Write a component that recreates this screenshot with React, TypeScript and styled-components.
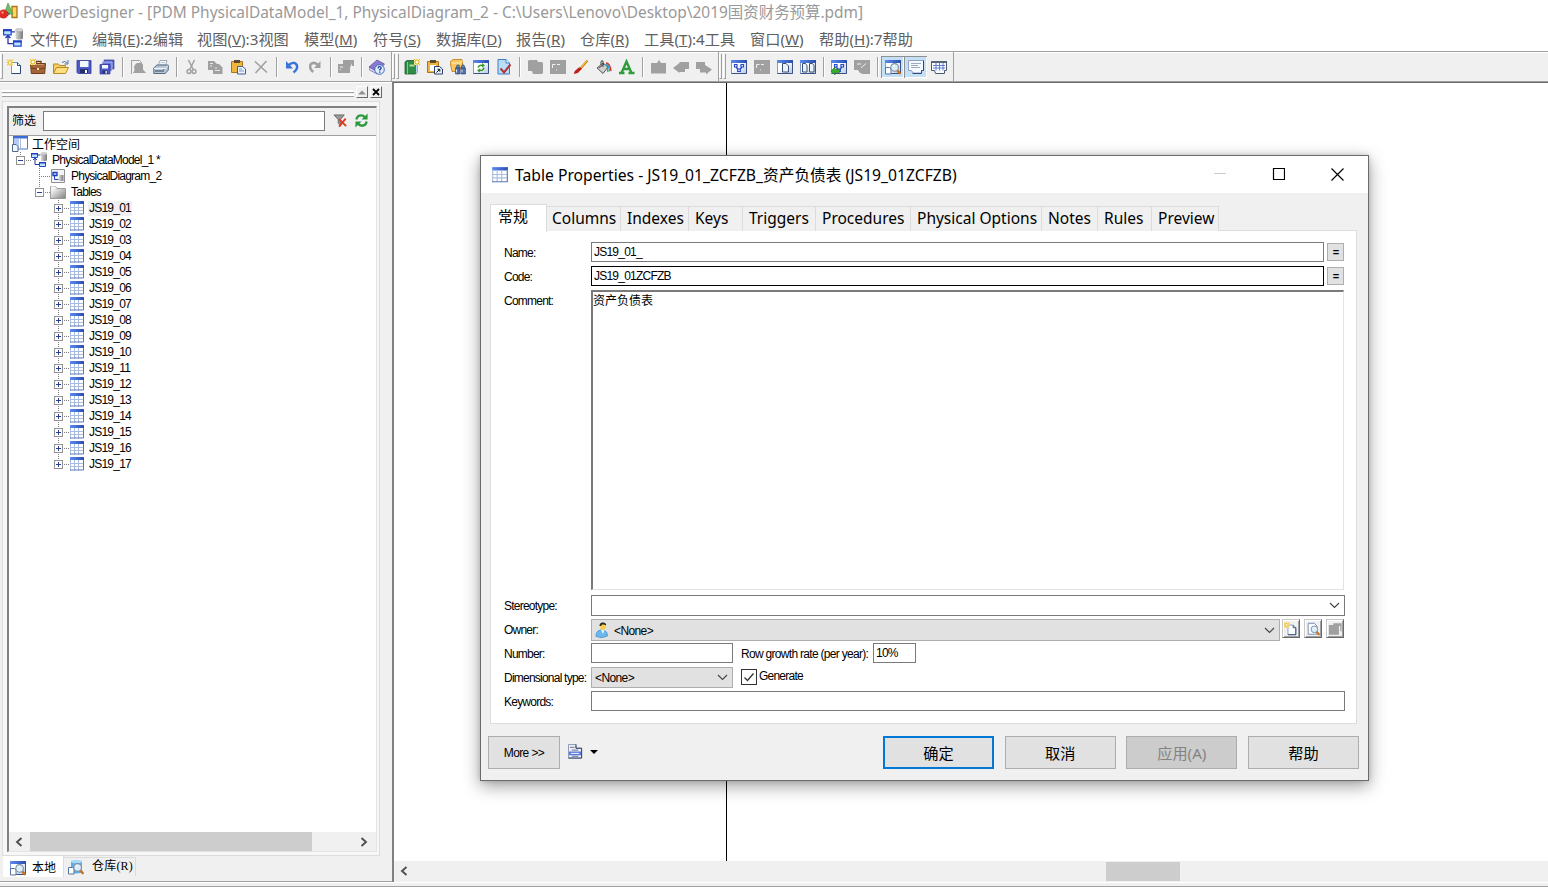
import React from "react";
import styled, { createGlobalStyle, css } from "styled-components";

const UI = `"Noto Sans", "Noto Sans CJK SC", sans-serif`;
const SMALL = `"Liberation Sans", "Noto Sans CJK SC", sans-serif`;

const Global = createGlobalStyle`
  * { box-sizing: border-box; }
  body { margin: 0; background: #f0f0f0; overflow: hidden; }
  input, textarea, button { font: inherit; letter-spacing: inherit; color: inherit; }
`;

/* ---------- icons ---------- */

const Svg = styled.svg`
  display: block;
  flex: none;
`;

const spark = (
  <g>
    <path d="M0 0h6v6h-6z" fill="#fdf0a8" />
    <path d="M0 0l6 6M6 0l-6 6M3 0v6M0 3h6" stroke="#dcaa1c" strokeWidth=".9" />
    <path d="M2 2h2v2h-2z" fill="#fffbe0" />
  </g>
);
const lens = (
  <g>
    <path d="M12 11l2.6 3" stroke="#c8731c" strokeWidth="2.6" strokeLinecap="round" />
    <circle cx="9.6" cy="8.4" r="3.8" fill="#dcecf8" stroke="#7d8ea0" strokeWidth="1.1" />
    <path d="M7.8 7.6a2 2 0 0 1 2-1.4" stroke="#fff" fill="none" />
  </g>
);
const win = (
  <g>
    <path d="M.5 1.5h15v13h-15z" fill="url(#pane)" stroke="#7e9ad0" />
    <path d="M0 1h16v3h-16z" fill="url(#blueBar)" />
    <path d="M15.5 4v10.5h-15" stroke="#3c5282" fill="none" />
  </g>
);
const nodes = (
  <g fill="#fff" stroke="#2748c8" strokeWidth="1.2">
    <path d="M5 8l3 3.5 3-3.5" fill="none" />
    <path d="M3.500 5.500h2.500v2.500h-2.500zM10 5.500h2.500v2.500h-2.500zM6.700 10h2.600v2.500h-2.600z" />
  </g>
);
const dbModel = (
  <g>
    <path d="M10 1.500v6.500c0 1.600 6 1.600 6 0v-6.500z" fill="url(#steel)" />
    <ellipse cx="13" cy="1.600" rx="3" ry="1.200" fill="#d8d8d8" stroke="#aaa" strokeWidth=".5" />
    <path d="M4 6v6.500h4M2 8l2-2 2 2M6 3h3.500" stroke="#2232a8" fill="none" />
    <path d="M.5 1.500h6v4h-6zM8.500 10.500h6v4h-6z" fill="#bfe2fb" stroke="#1f4fd0" />
    <path d="M0 1h7v1.600h-7zM8 10h7v1.600h-7z" fill="#1f3fc0" />
  </g>
);

const G = "#a0a0a0";

const ICONS: Record<string, React.ReactNode> = {
  app: (
    <g>
      <path d="M12 3.500h5v11h-5z" fill="#ffd75a" stroke="#a8741c" strokeWidth="1.300" />
      <path d="M8 0l5 11h-9z" fill="#6cbf62" stroke="#4c9248" strokeWidth=".6" />
      <circle cx="3.500" cy="11" r="4.500" fill="#e02a24" />
      <circle cx="2.500" cy="9.500" r="1.200" fill="#ff8f80" />
      <path d="M7 9l2.500 2-2.500 2" stroke="#5c4030" fill="none" />
    </g>
  ),
  model: dbModel,
  new: (
    <g>
      <path d="M4.500 3.500h6l3 3v8h-9z" fill="#fafdff" stroke="#7f98b8" />
      <path d="M10.500 3.500v3h3v8h-9" stroke="#2c466e" fill="none" />
      <g transform="translate(0 .5)">{spark}</g>
    </g>
  ),
  briefcase: (
    <g>
      <path d="M6 4v-1.500h5v1.500" stroke="#6b3a1a" fill="none" strokeWidth="1.300" />
      <path d="M.5 4.500h15l-.8 10h-13.400z" fill="#a4653a" stroke="#6f3d1e" />
      <path d="M1 9q7 2.500 14 0" stroke="#6f3d1e" fill="none" />
      <path d="M2 5.500h12" stroke="#cc9468" />
      <path d="M7 9h2v2h-2z" fill="#f2dc9a" />
      {spark}
    </g>
  ),
  open: (
    <g>
      <path d="M.5 14v-9h5l1 1.500h6v3" fill="#f5cf65" stroke="#b98a2a" />
      <path d="M.5 14.500l3-6h12l-3 6z" fill="#ffdf7e" stroke="#b98a2a" />
      <path d="M9 3.500q3-2.500 5 .5M15 1v4h-3.500" stroke="#50709c" fill="none" />
    </g>
  ),
  save: (
    <g>
      <path d="M1 1.500h14v13h-13l-1-1z" fill="#4d59c4" stroke="#2e3798" strokeWidth=".8" />
      <path d="M4 2h8.500v6h-8.500z" fill="#f2f6ff" />
      <path d="M4 10h8v4h-8z" fill="#23306c" />
      <path d="M9 11h2v3h-2z" fill="#fff" />
    </g>
  ),
  saveAll: (
    <g>
      <path d="M5 1h10v9h-10z" fill="#5563c8" stroke="#2e3798" strokeWidth=".7" />
      <path d="M3 3h10v9h-10z" fill="#6a78d8" stroke="#c9d0ff" strokeWidth=".7" />
      <path d="M1 5.500h10v9.500h-10z" fill="#4d59c4" stroke="#2e3798" strokeWidth=".7" />
      <path d="M3 6h6v3.500h-6z" fill="#f2f6ff" />
      <path d="M3.500 11.500h5v3h-5z" fill="#23306c" />
      <path d="M6.500 12h1.300v2.500h-1.300z" fill="#fff" />
    </g>
  ),
  preview: (
    <g fill={G}>
      <path d="M1.500 1.500h8l2 2v2" stroke={G} fill="none" />
      <path d="M1 1h1v14h-1zM1 14h15l-3-3.500v-5l-3-2-4 1-2 3 .5 4-1.500 2.500z" />
    </g>
  ),
  print: (
    <g>
      <path d="M5 7l2-5.500h7l-2 6z" fill="#fff" stroke="#8494ac" strokeWidth=".8" />
      <path d="M7.500 3.500h4.500M7 5.300h4.500" stroke="#9fb3cc" strokeWidth=".7" />
      <path d="M.8 9l3-3h11.500v5l-3 3.500h-11.500z" fill="#b9c6d6" stroke="#4a5f7c" strokeWidth=".9" />
      <path d="M1 9.500h11.500l2.500-3" stroke="#fff" fill="none" strokeWidth=".8" />
      <path d="M2 12h9" stroke="#33475f" />
      <path d="M10 10.500h1.500" stroke="#3ab54a" />
    </g>
  ),
  cut: (
    <g stroke={G} fill="none" strokeWidth="1.500">
      <path d="M4.500 1l4.500 9M10.500 1l-4.500 9" />
      <circle cx="5" cy="12.500" r="1.900" />
      <circle cx="10" cy="12.500" r="1.900" />
    </g>
  ),
  copy: (
    <g fill={G}>
      <path d="M1 2h6l3 3v6h-9z" />
      <path d="M6 5h6l3.500 3.500v6.500h-9.500z" />
      <path d="M3 4.500h3M3 7h2M8 9h2M8 11.500h5" stroke="#f0f0f0" strokeWidth=".9" />
    </g>
  ),
  paste: (
    <g>
      <path d="M1.500 2.500h11v11h-11z" fill="#eeb63e" stroke="#a87618" />
      <path d="M4 1h6v3h-6z" fill="#5a4a32" />
      <path d="M7.500 7.500h5l3 2.500v5h-8z" fill="#eaf3ff" stroke="#41608e" />
      <path d="M9 10h3M9 12h5" stroke="#7a99c4" />
    </g>
  ),
  del: <path d="M2 2.500l12 11M13.500 2l-11 12" stroke={G} strokeWidth="1.600" />,
  undo: (
    <g>
      <path d="M4 6.500q6-5 8.800-.5 1.500 4-3.300 7.500" stroke="#3a74d8" strokeWidth="2.500" fill="none" />
      <path d="M2 2v7.500h7z" fill="#3a74d8" />
    </g>
  ),
  redo: (
    <g>
      <path d="M11 6q-4-4-7.500-.5-1.500 4 2.700 7.500" stroke={G} strokeWidth="2.500" fill="none" />
      <path d="M13.500 2v7h-6.500z" fill={G} />
    </g>
  ),
  props: (
    <g fill={G}>
      <path d="M5 1h11v6h-2v-3l-2 5v5h-12v-9h5z" />
      <path d="M2 8h3M2 10.500h1" stroke="#f0f0f0" />
    </g>
  ),
  gProps: <path d="M1 3.500h5v-2h9.500v9h-1.500v-6h-1.500v10h-11.500z" fill={G} />,
  help: (
    <g>
      <path d="M0 8l8-7 7.500 4-7 8z" fill="#8a7ad0" stroke="#5546a0" strokeWidth=".7" />
      <path d="M0 8v2.500l8 4.500.5-2z" fill="#e8e6f8" stroke="#5546a0" strokeWidth=".7" />
      <circle cx="10.500" cy="10.500" r="4.800" fill="#e2eefc" stroke="#3e68bc" />
      <path d="M9 9.300q.2-1.600 1.600-1.600t1.600 1.400q0 1-1.500 1.800v.6M10.700 12.500v1.200" stroke="#1d3f9a" strokeWidth="1.300" fill="none" />
    </g>
  ),
  book: (
    <g>
      <path d="M1 3l2-1.500h10v12l-1.500 1.500h-10.500z" fill="#2f8c46" stroke="#1e5c30" strokeWidth=".8" />
      <path d="M3 3h1v12h-1z" fill="#7fc98c" />
      <path d="M12.500 6v8" stroke="#bcd4f0" />
      <path d="M5.500 5.500h5v2h-5z" fill="#a9dfae" />
      <g transform="translate(10 0)">{spark}</g>
    </g>
  ),
  pasteLink: (
    <g>
      <path d="M.5 2.500h11v11h-11z" fill="#eeb63e" stroke="#a87618" />
      <path d="M3 1h6v3h-6z" fill="#5a4a32" />
      <path d="M3 6h6v6h-6z" fill="#fff" />
      <path d="M7.500 7.500h5l3 2.500v5h-8z" fill="#eaf3ff" stroke="#2a406e" />
      <path d="M9.500 13.500l3-3M10.500 10.300h2.300v2.300" stroke="#111" fill="none" />
    </g>
  ),
  find: (
    <g>
      <path d="M0 3l3-2.500h9l1 7-5 5h-6z" fill="#ffc65c" stroke="#b67a1e" strokeWidth=".8" />
      <path d="M2 4h9l1-2.500" stroke="#fff0c0" fill="none" />
      <path d="M6 9l1-3h2l1 3zM11 9l1-3h2l1 3z" fill="#6a86b4" stroke="#2c4370" strokeWidth=".6" />
      <path d="M5.500 9h4.500v6h-4.500zM11 9h4.500v6h-4.500z" fill="#4f6fa6" stroke="#2c4370" strokeWidth=".6" />
      <path d="M6.500 10.500v3M12 10.500v3" stroke="#dce9ff" />
    </g>
  ),
  syncWin: (
    <g>
      {win}
      <path d="M5 8.500q1-3 4.500-2M11 8.500q-1 4-4.500 2.500" stroke="#3a9a28" strokeWidth="1.500" fill="none" />
      <path d="M9 4l3 2.500-3 2zM7 9.500l-3 2 3 2z" fill="#3a9a28" />
    </g>
  ),
  check: (
    <g>
      <path d="M2 .5h8l3.500 3.500v11h-11.500z" fill="#b9dcf8" stroke="#3d7cc0" />
      <path d="M10 .5v3.500h3.500" fill="#fff" stroke="#3d7cc0" />
      <path d="M4.500 9.500l3.500 4 6.500-8" stroke="#b03636" strokeWidth="2" fill="none" />
    </g>
  ),
  gShape: <path d="M1 2l1-1h8l1 2h4l1 1v10l-1 1h-9l-1-3h-4z" fill={G} />,
  gWin: (
    <g>
      <path d="M0 1h16v14h-16z" fill={G} />
      <path d="M2.500 9v-3.500h3M7 5.500h3M6 11h1" stroke="#f0f0f0" fill="none" />
    </g>
  ),
  brush: (
    <g>
      <path d="M14.500 1.500l-7 8" stroke="#c98a14" strokeWidth="2.200" />
      <path d="M14.500 1l-7 8" stroke="#ffd860" strokeWidth=".8" />
      <path d="M7.800 8.500l1 1.500-4 4-4 1 1-3 4-3.500z" fill="#b8221c" />
    </g>
  ),
  bucket: (
    <g>
      <path d="M1 9l6-5 5 4-5 6.500z" fill="#d0d0d0" stroke="#444" strokeWidth=".9" />
      <path d="M3 9l5-4M7 8v-6q-2-1-2 1v3" stroke="#444" fill="none" />
      <path d="M10 4q4 0 5 8" stroke="#e02a24" strokeWidth="1.400" fill="none" />
      <path d="M10 5.500q3 0 3.500 7" stroke="#18a0e0" strokeWidth="1.400" fill="none" />
      <path d="M11 8q1 2 .8 5" stroke="#28b840" strokeWidth="1.200" fill="none" />
    </g>
  ),
  letter: (
    <path
      d="M0 14h5.500M9.500 14h6M2.500 14l5-11.500 5 11.500M5 10h6"
      stroke="#2f9c3c"
      strokeWidth="2.400"
      fill="none"
    />
  ),
  gFolder: <path d="M1 4h6l2-3 2 3h5v10.500h-15z" fill={G} />,
  gLeft: <path d="M0 9l6.500-5v-1h9.500v7h-4v3h-5.500v1z" fill={G} />,
  gRight: <path d="M0 3h9v3l7 4.500-6 5v-2h-6v-3.500h-4z" fill={G} />,
  winNodes: (
    <g>
      {win}
      {nodes}
    </g>
  ),
  winPage: (
    <g>
      {win}
      <path d="M5.500 4.500h3.500l2.500 2.500v6h-6z" fill="#eaf2fb" stroke="#3c5070" />
    </g>
  ),
  winPages: (
    <g>
      {win}
      <path d="M2.500 4.500h3l1.500 2v6.500h-4.500zM9.500 4.500h3l1.500 2v6.500h-4.500z" fill="#eaf2fb" stroke="#3c5070" />
    </g>
  ),
  winGo: (
    <g>
      {win}
      {nodes}
      <path d="M0 12l4-4v2.500h4.500v3h-4.500v2.500z" fill="#35b02c" stroke="#1c7016" strokeWidth=".6" />
    </g>
  ),
  gWinGo: (
    <g>
      <path d="M0 1h16v14h-7l-3-1-2-3h-4z" fill={G} />
      <path d="M3 5h4M7 9l5-4.500" stroke="#f0f0f0" />
    </g>
  ),
  winLens: (
    <g>
      {win}
      <path d="M.5 8.500h4l1.500 1.500v5h-5.500z" fill="#fff" stroke="#5673a4" />
      {lens}
    </g>
  ),
  winText: (
    <g>
      <path d="M.5 1.500h15v10h-2v2.500h-8.500l-1.500-2.500h-3z" fill="#f7fbff" stroke="#8ea2c4" />
      <path d="M15.500 1.500v10h-2v3h-9" stroke="#344a74" fill="none" />
      <path d="M3 4.500h10M3 6.500h7M3 8.500h9" stroke="#9caac4" />
    </g>
  ),
  winGrid: (
    <g>
      <path d="M.5 2.500h15v9h-2v3h-9l-1-3h-3z" fill="#f7fbff" stroke="#4c5870" />
      <path d="M0 2h16v2h-16z" fill="#5a6478" />
      <path d="M2 6.500h12M2 9h12M5 4v7.500M8.500 4v7.500M12 4v7.500" stroke="#5673c8" strokeWidth=".9" />
    </g>
  ),
  filterOff: (
    <g>
      <path d="M1 2h11l-4 5v6l-2.500-2v-4z" fill="#999" stroke="#555" strokeWidth=".8" />
      <path d="M6.500 6.500l7.500 7.500M13.500 6l-7 8.500" stroke="#e03c20" strokeWidth="2.100" />
    </g>
  ),
  refresh: (
    <g>
      <path d="M2.500 7q1-4.500 5-4.500 2.500 0 4 2M13.500 9q-1 4.500-5 4.500-2.500 0-4-2" stroke="#2c9a3c" strokeWidth="2.600" fill="none" />
      <path d="M14.500 .5v6.500h-6.500zM1.500 15.500v-6.500h6.500z" fill="#2c9a3c" />
    </g>
  ),
  workspace: (
    <g>
      <path d="M1.500 .5h14v12.500h-14z" fill="#fff" stroke="#4a78d0" />
      <path d="M1 0h15v2.500h-15z" fill="#3a6cd8" />
      <path d="M2 3h5v9.500h-5z" fill="#b4ccf2" />
      <path d="M8 3h1v10h-1z" fill="#a8bce0" />
      <path d="M.5 8.500h3.500l2 2v5h-5.500z" fill="#f4f8ff" stroke="#50688c" />
    </g>
  ),
  diagram: (
    <g>
      <path d="M1.500 1.500h13v13h-13z" fill="#f4f4f4" stroke="#909090" />
      <path d="M3 4.500h4v3h-4z" fill="#bfe2fb" stroke="#1f3fc0" strokeWidth="1.400" />
      <path d="M4.500 8v3.500h4" stroke="#1f3fc0" fill="none" />
      <path d="M9 7h4.500v6h-4.500z" fill="url(#steel)" />
    </g>
  ),
  folder: (
    <g>
      <path d="M.5 14.500v-12h5l1.500 2h8.500v10z" fill="url(#folderGray)" stroke="#8c8c8c" strokeWidth=".8" />
      <path d="M1 3h4.500" stroke="#fff" />
    </g>
  ),
  table: (
    <g>
      <path d="M1 1h14v13.500h-14z" fill="#fff" />
      <path d="M1 1h14v3h-14z" fill="url(#blueBar)" />
      <path d="M1.500 4v10.500M5.500 4v10.500M9.500 4v10.500M1 7.500h13M1 10.500h13" stroke="#a9bde0" />
      <path d="M1 14h13.500v-10" stroke="#5a78b4" fill="none" />
    </g>
  ),
  repo: (
    <g>
      <path d="M3 2.500v11q5 2 11 0v-11z" fill="#58b0e8" />
      <ellipse cx="8.500" cy="2.500" rx="5.500" ry="1.800" fill="#a8daf8" />
      <path d="M.5 8.500h4l1.500 1.500v5h-5.500z" fill="#fff" stroke="#5673a4" />
      {lens}
    </g>
  ),
  user: (
    <g>
      <path d="M1 14.500q-.5-5 4-6.500h4q4 2 3.500 6-5.500 3-11.500.5z" fill="#6cb8ee" stroke="#3a84c0" strokeWidth=".6" />
      <path d="M6 8l2 4 1.500-4z" fill="#e8f6ff" />
      <circle cx="8" cy="5" r="2.800" fill="#ffcf48" />
      <path d="M4.500 4q0-4 4-3.500 3 .5 2.500 3-2-1.500-4-1-.5 2-2.500 1.500z" fill="#33261a" />
    </g>
  ),
  pageLens: (
    <g>
      <path d="M2.500 1.500h7l3 3v9.500h-10z" fill="#fafdff" stroke="#6a86aa" />
      {lens}
    </g>
  ),
  report: (
    <g>
      <path d="M.5 .5h8v4h6v10.500h-14z" fill="#eef0f6" stroke="#8894b4" />
      <path d="M8.500 .5v4h6v10.500h-14" stroke="#2c3c64" fill="none" />
      <path d="M2 3.500h5M4 6.500h7M4 13h7" stroke="#606c88" />
      <path d="M1 8h13v4h-13z" fill="#5c78e0" />
      <path d="M3 10h9" stroke="#fff" />
    </g>
  ),
};

const Icon = ({ name, size = 16 }: { name: string; size?: number }) => (
  <Svg width={size} height={size} viewBox={name === "app" ? "0 0 18 16" : "0 0 16 16"} fill="none">
    {ICONS[name]}
  </Svg>
);

const DefsSvg = styled.svg`
  position: absolute;
  width: 0;
  height: 0;
`;
const SharedGradients = () => (
  <DefsSvg>
    <defs>
      <linearGradient id="blueBar" x1="0" x2="1">
        <stop offset="0" stopColor="#5c8cf0" />
        <stop offset="1" stopColor="#2a4cb0" />
      </linearGradient>
      <linearGradient id="pane" x1="0" y1="0" x2="1" y2="1">
        <stop offset="0.4" stopColor="#ffffff" />
        <stop offset="1" stopColor="#b4c8e4" />
      </linearGradient>
      <linearGradient id="steel" x1="0" x2="1">
        <stop offset="0" stopColor="#d8d8d8" />
        <stop offset="1" stopColor="#7c7c7c" />
      </linearGradient>
      <linearGradient id="folderGray" x1="0" y1="0" x2="1" y2="1">
        <stop offset="0.2" stopColor="#f4f4f4" />
        <stop offset="1" stopColor="#7e7e7e" />
      </linearGradient>
    </defs>
  </DefsSvg>
);

/* ---------- application frame ---------- */

const Window = styled.div`
  width: 1548px;
  height: 887px;
  display: flex;
  flex-direction: column;
  background: #f0f0f0;
  font-family: ${UI};
  position: relative;
  overflow: hidden;
`;
const TitleBar = styled.header`
  height: 24px;
  padding-bottom: 2px;
  display: flex;
  align-items: center;
  gap: 5px;
  background: #fff;
  color: #999;
  font-size: 15.45px;
  white-space: pre;
`;
const MenuBar = styled.nav`
  height: 27px;
  padding-left: 3px;
  display: flex;
  align-items: center;
  background: #fff;
  color: #606060;
  font-size: 15.2px;
`;
const MenuItem = styled.span<{ $w: number }>`
  width: ${(p) => p.$w}px;
  flex: none;
  white-space: nowrap;
`;
const MenuIcon = styled.span`
  width: 27px;
`;

const Toolbars = styled.div`
  height: 31px;
  display: flex;
  border-top: 1px solid #a0a0a0;
  border-bottom: 1px solid #a0a0a0;
  box-shadow: inset 0 1px 0 #fff;
`;
const ToolGroup = styled.div<{ $w: number }>`
  width: ${(p) => p.$w}px;
  display: flex;
  align-items: center;
  border-right: 1px solid #a0a0a0;
`;
const Grip = styled.span<{ $w: number; $double?: boolean }>`
  width: ${(p) => p.$w}px;
  height: 25px;
  flex: none;
  display: flex;
  justify-content: flex-end;
  padding-right: ${(p) => (p.$double ? 1 : 0)}px;
  gap: 1px;
`;
const GripBar = styled.i`
  width: 3px;
  border: solid;
  border-width: 0 1px 1px 1px;
  border-color: #fff #a0a0a0 #a0a0a0 #fff;
`;
const ToolButton = styled.span<{ $on?: boolean }>`
  width: 23px;
  height: 22px;
  padding: 3px 0 0 4px;
  flex: none;
  ${(p) =>
    p.$on &&
    css`
      background: #c4e0f6;
      box-shadow: inset 1px 1px 0 #909090, inset -1px -1px 0 #fff;
    `}
`;
const ToolSep = styled.i`
  width: 2px;
  height: 20px;
  margin: 0 2px 0 4px;
  flex: none;
  background: #a0a0a0;
  border-right: 1px solid #fff;
`;

const Tools = ({ items, active = [] }: { items: string[]; active?: string[] }) => (
  <>
    {items.map((n, i) =>
      n === "|" ? (
        <ToolSep key={i} />
      ) : (
        <ToolButton key={i} $on={active.includes(n)}>
          <Icon name={n} />
        </ToolButton>
      )
    )}
  </>
);

const Workspace = styled.div`
  height: 800px;
  display: flex;
`;
const StatusStrip = styled.div`
  height: 5px;
  border-top: 1px solid #fff;
  border-bottom: 1px solid #a0a0a0;
`;

/* ---------- browser pane ---------- */

const Side = styled.aside`
  width: 392px;
  display: flex;
  flex-direction: column;
  border-top: 1px solid #fff;
  border-bottom: 1px solid #a0a0a0;
  font-family: ${SMALL};
  font-size: 12px;
  letter-spacing: -0.77px;
`;
const SideGrip = styled.div`
  height: 18px;
  padding: 3px 0 0 2px;
  display: flex;
  gap: 3px;
`;
const GripLines = styled.div`
  width: 352px;
  height: 7px;
  margin-top: 4px;
  background: linear-gradient(#fff 0 2px, #a0a0a0 2px 3px, transparent 3px 4px, #fff 4px 6px, #a0a0a0 6px 7px);
`;
const TinyButton = styled.span`
  width: 12px;
  height: 12px;
  margin-left: -1px;
  border: 1px solid;
  border-color: #fff #696969 #696969 #fff;
  display: flex;
  align-items: center;
  justify-content: center;
`;
const SideFrame = styled.section`
  width: 378px;
  height: 755px;
  margin-left: 2px;
  padding: 4px 2px 2px 4px;
  border: 1px solid #dcdcdc;
  background: #f7f7f7;
`;
const SideInner = styled.div`
  height: 746px;
  width: 370px;
  display: flex;
  flex-direction: column;
  border: solid;
  border-width: 2px 1px 1px 2px;
  border-color: #808080 #e3e3e3 #e3e3e3 #808080;
  background: #fff;
`;
const FilterBar = styled.div`
  height: 28px;
  padding: 2px 0 0 3px;
  display: flex;
  align-items: flex-start;
  background: #f0f0f0;
  border-bottom: 1px solid #a0a0a0;
  font-size: 12px;
  letter-spacing: 0;
`;
const FilterLabel = styled.span`
  width: 31px;
  flex: none;
  line-height: 22px;
`;
const FilterInput = styled.input`
  width: 282px;
  height: 20px;
  flex: none;
  margin: 1px 8px 0 0;
  border: 1px solid #7a7a7a;
  background: #fff;
`;
const FilterAction = styled.span`
  width: 21px;
  padding-top: 3px;
`;

const Tree = styled.div`
  flex: 1;
  padding-left: 3px;
`;
const TreeRow = styled.div`
  height: 16px;
  display: flex;
  align-items: center;
`;
const hDots = `repeating-linear-gradient(90deg, #808080 0 1px, transparent 1px 2px)`;
const vDots = `repeating-linear-gradient(#808080 0 1px, transparent 1px 2px)`;
const Branch = styled.span<{ $line: "none" | "end" | "through" }>`
  width: 19px;
  height: 16px;
  flex: none;
  padding: 4px 0 0 4px;
  ${(p) =>
    p.$line !== "none" &&
    css`
      background: ${hDots} 8px 8px / 11px 1px no-repeat,
        ${vDots} 8px 0 / 1px ${p.$line === "end" ? 8 : 16}px no-repeat;
    `}
`;
const TreeLabel = styled.span<{ $hot?: boolean; $cjk?: boolean; $near?: boolean }>`
  height: 15px;
  line-height: 15px;
  margin-left: ${(p) => (p.$near ? 3 : 4)}px;
  padding: 0 1px;
  white-space: pre;
  background: ${(p) => (p.$hot ? "#f0f0f0" : "transparent")};
  ${(p) => p.$cjk && "letter-spacing: 0; padding: 0; line-height: 17px;"}
`;

const Expander = ({ open }: { open: boolean }) => (
  <Svg width="9" height="9" viewBox="0 0 9 9" shapeRendering="crispEdges">
    <rect x=".5" y=".5" width="8" height="8" fill="#fff" stroke="#919191" />
    <path d={open ? "M2 4.500h5" : "M2 4.500h5M4.500 2v5"} stroke="#2a3f9c" />
  </Svg>
);

type Node = { level: number; icon: string; label: string; open?: boolean; leaf?: boolean; end?: boolean; hot?: boolean; cjk?: boolean };
const tableNodes: Node[] = Array.from({ length: 17 }, (_, i) => ({
  level: 3,
  icon: "table",
  label: `JS19_${String(i + 1).padStart(2, "0")}`,
  open: false,
  end: i === 16,
  hot: i === 0,
}));
const nodesList: Node[] = [
  { level: 0, icon: "workspace", label: "工作空间", leaf: true, cjk: true },
  { level: 1, icon: "model", label: "PhysicalDataModel_1 *", open: true, end: true },
  { level: 2, icon: "diagram", label: "PhysicalDiagram_2", leaf: true },
  { level: 2, icon: "folder", label: "Tables", open: true, end: true },
  ...tableNodes,
];

const TreeItem = ({ node }: { node: Node }) => (
  <TreeRow>
    {Array.from({ length: Math.max(0, node.level - 1) }, (_, i) => (
      <Branch key={i} $line="none" />
    ))}
    {node.level > 0 && (
      <Branch $line={node.end ? "end" : "through"}>{!node.leaf && <Expander open={!!node.open} />}</Branch>
    )}
    <Icon name={node.icon} />
    <TreeLabel $hot={node.hot} $cjk={node.cjk} $near={node.level === 3}>
      {node.label}
    </TreeLabel>
  </TreeRow>
);

const ScrollBar = styled.div<{ $h: number }>`
  height: ${(p) => p.$h}px;
  display: flex;
  align-items: center;
  background: #f0f0f0;
`;
const ScrollArrow = styled.span`
  width: 21px;
  padding-right: 2px;
  display: flex;
  justify-content: center;
`;
const ScrollGap = styled.span<{ $w: number }>`
  width: ${(p) => p.$w}px;
`;
const Thumb = styled.span<{ $w: number }>`
  width: ${(p) => p.$w}px;
  height: 19px;
  background: #cdcdcd;
`;
const Arrow = ({ right }: { right?: boolean }) => (
  <Svg width="8" height="10" viewBox="0 0 8 10" fill="none">
    <path d={right ? "M1.500 1l4.500 4-4.500 4" : "M6.500 1l-4.500 4 4.500 4"} stroke="#505050" strokeWidth="1.900" />
  </Svg>
);

const SideTabs = styled.div`
  display: flex;
  align-items: flex-start;
  padding-left: 3px;
  letter-spacing: 0;
  font-size: 12px;
`;
const SideTab = styled.span<{ $active?: boolean; $w: number }>`
  width: ${(p) => p.$w}px;
  height: ${(p) => (p.$active ? 21 : 19)}px;
  margin-top: ${(p) => (p.$active ? 0 : 1)}px;
  padding: ${(p) => (p.$active ? "2px 0 0 7px" : "0 0 0 4px")};
  display: flex;
  align-items: center;
  gap: ${(p) => (p.$active ? 6 : 8)}px;
  background: ${(p) => (p.$active ? "#fff" : "transparent")};
  border: solid #dcdcdc;
  border-width: ${(p) => (p.$active ? "0 1px 0 0" : "1px 1px 0 0")};
`;
const TabText = styled.span`
  padding-bottom: 3px;
`;
const Mono = styled(TabText)`
  font-family: "Liberation Serif", "Noto Sans CJK SC", serif;
  white-space: nowrap;
  letter-spacing: 0.2px;
  padding-bottom: 5px;
`;

/* ---------- diagram canvas ---------- */

const Canvas = styled.main`
  flex: 1;
  display: flex;
  flex-direction: column;
  padding-bottom: 1px;
  border: solid #696969;
  border-width: 1px 0 0 2px;
  border-left-color: #808080;
`;
const Sheet = styled.div`
  flex: 1;
  background: #fff;
`;
const PageEdge = styled.div`
  width: 333px;
  height: 100%;
  border-right: 1px solid #000;
`;

/* ---------- dialog ---------- */

const Dialog = styled.section`
  position: absolute;
  left: 480px;
  top: 155px;
  width: 889px;
  height: 626px;
  display: flex;
  flex-direction: column;
  border: 1px solid #6b6b6b;
  background: #f0f0f0;
  box-shadow: 0 5px 16px rgba(0, 0, 0, 0.38), 0 0 5px rgba(0, 0, 0, 0.15);
  font-family: ${SMALL};
  font-size: 12px;
  letter-spacing: -0.77px;
  color: #000;
`;
const DialogTitle = styled.header`
  height: 37px;
  padding: 0 24px 0 10px;
  display: flex;
  align-items: center;
  background: #fff;
  font: 15.7px ${UI};
  letter-spacing: 0;
`;
const TitleText = styled.span`
  flex: 1;
  margin-left: 6px;
  padding-bottom: 1px;
  white-space: nowrap;
`;
const Controls = styled.span`
  display: flex;
  gap: 46px;
`;

const Tabs = styled.div`
  height: 38px;
  padding: 9px 0 0 9px;
  display: flex;
  align-items: flex-end;
  font: 15.5px ${UI};
  letter-spacing: 0;
`;
const Tab = styled.span<{ $w: number; $active?: boolean; $pad?: number }>`
  width: ${(p) => p.$w}px;
  height: ${(p) => (p.$active ? 28 : 25)}px;
  margin-bottom: ${(p) => (p.$active ? -1 : 0)}px;
  padding-left: ${(p) => p.$pad ?? 6}px;
  line-height: 23px;
  font-size: ${(p) => (p.$active ? 15 : 15.5)}px;
  border: 1px solid #dcdcdc;
  border-left-width: ${(p) => (p.$active ? 1 : 0)}px;
  border-bottom: 0;
  background: ${(p) => (p.$active ? "#fff" : "#f0f0f0")};
  white-space: nowrap;
  z-index: ${(p) => (p.$active ? 1 : 0)};
`;
const Page = styled.div`
  width: 867px;
  height: 494px;
  margin: -1px 0 0 9px;
  padding: 11px 11px 0 13px;
  display: flex;
  flex-direction: column;
  gap: 4px;
  border: 1px solid #dcdcdc;
  background: #fff;
`;
const FieldRow = styled.div<{ $h?: number }>`
  height: ${(p) => p.$h ?? 20}px;
  display: flex;
  align-items: flex-start;
`;
const Label = styled.label<{ $raised?: boolean }>`
  width: 87px;
  flex: none;
  line-height: ${(p) => (p.$raised ? 19 : 23)}px;
  white-space: nowrap;
`;
const Input = styled.input<{ $w: number; $focus?: boolean }>`
  width: ${(p) => p.$w}px;
  height: 20px;
  padding: 0 2px 1px;
  border: 1px solid ${(p) => (p.$focus ? "#000" : "#7a7a7a")};
  border-radius: 0;
  background: #fff;
  outline: none;
`;
const EqualButton = styled.button`
  width: 17px;
  height: 18px;
  margin: 1px 0 0 3px;
  padding: 0;
  border: 1px solid #adadad;
  background: #e1e1e1;
  font-size: 11px;
  font-weight: bold;
  line-height: 14px;
`;
const Comment = styled.textarea`
  width: 753px;
  height: 300px;
  padding: 0 0 0 0;
  border: solid;
  border-width: 2px 1px 1px 2px;
  border-color: #7a7a7a #e3e3e3 #e3e3e3 #7a7a7a;
  font-size: 12px;
  line-height: 18px;
  letter-spacing: 0;
  resize: none;
  outline: none;
`;
const Select = styled.div<{ $w: number; $h: number; $gray?: boolean }>`
  width: ${(p) => p.$w}px;
  height: ${(p) => p.$h}px;
  padding: 0 4px 0 3px;
  display: flex;
  align-items: center;
  gap: 3px;
  border: 1px solid ${(p) => (p.$gray ? "#adadad" : "#7a7a7a")};
  background: ${(p) => (p.$gray ? "#e1e1e1" : "#fff")};
`;
const SelectText = styled.span`
  flex: 1;
  padding-top: 1px;
  letter-spacing: -0.6px;
`;
const Chevron = () => (
  <Svg width="11" height="7" viewBox="0 0 11 7" fill="none">
    <path d="M1 1l4.500 4.500 4.500-4.500" stroke="#444" strokeWidth="1.100" />
  </Svg>
);
const IconButton = styled.button<{ $first?: boolean }>`
  width: 18px;
  height: 19px;
  margin-left: ${(p) => (p.$first ? 2 : 4)}px;
  padding: 0 0 0 1px;
  border: 1px solid;
  border-color: #c8c8c8 #696969 #696969 #c8c8c8;
  box-shadow: inset 1px 1px 0 #fff, inset -1px -1px 0 #a0a0a0;
  background: #f0f0f0;
`;
const GrowthLabel = styled.span`
  width: 132px;
  margin-left: 8px;
  line-height: 23px;
  letter-spacing: -0.7px;
  white-space: nowrap;
`;
const CheckBox = styled.span`
  width: 16px;
  height: 16px;
  margin: 2px 2px 0 8px;
  border: 1px solid #333;
  background: #fff;
`;
const Buttons = styled.footer`
  display: flex;
  padding: 12px 0 0 7px;
`;
const MoreButton = styled.button`
  width: 72px;
  height: 33px;
  flex: none;
  padding: 0;
  border: 1px solid #adadad;
  background: #e1e1e1;
  letter-spacing: -0.6px;
`;
const ReportMenu = styled.span`
  width: 323px;
  flex: none;
  padding: 8px 0 0 8px;
  display: flex;
  gap: 7px;
`;
const Caret = styled.i`
  width: 0;
  height: 0;
  margin-top: 6px;
  border: 4px solid transparent;
  border-top-color: #000;
`;
const PushButton = styled.button<{ $kind?: "default" | "disabled" }>`
  width: 111px;
  height: 33px;
  flex: none;
  margin-right: 10.67px;
  padding: 0 0 2px;
  border: ${(p) => (p.$kind === "default" ? "2px solid #0078d7" : "1px solid #adadad")};
  background: ${(p) => (p.$kind === "disabled" ? "#ccc" : "#e1e1e1")};
  color: ${(p) => (p.$kind === "disabled" ? "#838383" : "#000")};
  font: 15.2px ${UI};
  letter-spacing: 0;
`;

const TABS: [string, number, number?][] = [
  ["Columns", 74, 5],
  ["Indexes", 68],
  ["Keys", 54],
  ["Triggers", 73],
  ["Procedures", 95],
  ["Physical Options", 131],
  ["Notes", 56],
  ["Rules", 54],
  ["Preview", 67],
];

const MENU: [string, string, string, number][] = [
  ["文件(", "F", ")", 62],
  ["编辑(", "E", "):2编辑", 105],
  ["视图(", "V", "):3视图", 107],
  ["模型(", "M", ")", 69],
  ["符号(", "S", ")", 63],
  ["数据库(", "D", ")", 80],
  ["报告(", "R", ")", 64],
  ["仓库(", "R", ")", 64],
  ["工具(", "T", "):4工具", 106],
  ["窗口(", "W", ")", 69],
  ["帮助(", "H", "):7帮助", 100],
];

const TablePropertiesDialog = () => (
  <Dialog>
    <DialogTitle>
      <Icon name="table" size={18} />
      <TitleText>Table Properties - JS19_01_ZCFZB_资产负债表 (JS19_01ZCFZB)</TitleText>
      <Controls>
        <Svg width="13" height="13" viewBox="0 0 13 13">
          <path d="M1 5.500h12" stroke="#ccc" />
        </Svg>
        <Svg width="13" height="13" viewBox="0 0 13 13" fill="none">
          <path d="M1.500 .5h11v11h-11z" stroke="#000" strokeWidth="1.200" />
        </Svg>
        <Svg width="13" height="13" viewBox="0 0 13 13">
          <path d="M.5 .5l12 12M12.500 .5l-12 12" stroke="#000" strokeWidth="1.200" />
        </Svg>
      </Controls>
    </DialogTitle>
    <Tabs>
      <Tab $w={57} $active $pad={7}>
        常规
      </Tab>
      {TABS.map(([t, w, pad]) => (
        <Tab key={t} $w={w} $pad={pad}>
          {t}
        </Tab>
      ))}
    </Tabs>
    <Page>
      <FieldRow>
        <Label>Name:</Label>
        <Input $w={733} defaultValue="JS19_01_" />
        <EqualButton>=</EqualButton>
      </FieldRow>
      <FieldRow>
        <Label>Code:</Label>
        <Input $w={733} $focus defaultValue="JS19_01ZCFZB" />
        <EqualButton>=</EqualButton>
      </FieldRow>
      <FieldRow $h={301}>
        <Label>Comment:</Label>
        <Comment defaultValue="资产负债表" spellCheck={false} />
      </FieldRow>
      <FieldRow>
        <Label>Stereotype:</Label>
        <Select $w={754} $h={21}>
          <SelectText />
          <Chevron />
        </Select>
      </FieldRow>
      <FieldRow>
        <Label>Owner:</Label>
        <Select $w={689} $h={22} $gray>
          <Icon name="user" />
          <SelectText>&lt;None&gt;</SelectText>
          <Chevron />
        </Select>
        <IconButton $first>
          <Icon name="new" size={14} />
        </IconButton>
        <IconButton>
          <Icon name="pageLens" size={14} />
        </IconButton>
        <IconButton>
          <Icon name="gProps" size={14} />
        </IconButton>
      </FieldRow>
      <FieldRow>
        <Label>Number:</Label>
        <Input $w={142} />
        <GrowthLabel>Row growth rate (per year):</GrowthLabel>
        <Input $w={43} defaultValue="10%" />
      </FieldRow>
      <FieldRow>
        <Label>Dimensional type:</Label>
        <Select $w={142} $h={21} $gray>
          <SelectText>&lt;None&gt;</SelectText>
          <Chevron />
        </Select>
        <CheckBox>
          <Svg width="14" height="14" viewBox="0 0 14 14" fill="none">
            <path d="M2.500 7.500l3 3 6-7" stroke="#333" strokeWidth="1.300" />
          </Svg>
        </CheckBox>
        <Label $raised>Generate</Label>
      </FieldRow>
      <FieldRow>
        <Label>Keywords:</Label>
        <Input $w={754} />
      </FieldRow>
    </Page>
    <Buttons>
      <MoreButton>More &gt;&gt;</MoreButton>
      <ReportMenu>
        <Icon name="report" size={15} />
        <Caret />
      </ReportMenu>
      <PushButton $kind="default">确定</PushButton>
      <PushButton>取消</PushButton>
      <PushButton $kind="disabled">应用(A)</PushButton>
      <PushButton>帮助</PushButton>
    </Buttons>
  </Dialog>
);

export default function App() {
  return (
    <Window>
      <Global />
      <SharedGradients />
      <TitleBar>
        <Icon name="app" size={18} />
        <span>
          {"PowerDesigner - [PDM PhysicalDataModel_1, PhysicalDiagram_2 - C:\\Users\\Lenovo\\Desktop\\2019国资财务预算.pdm]"}
        </span>
      </TitleBar>
      <MenuBar>
        <MenuIcon>
          <Icon name="model" size={20} />
        </MenuIcon>
        {MENU.map(([a, key, b, w]) => (
          <MenuItem key={a} $w={w}>
            {a}
            <u>{key}</u>
            {b}
          </MenuItem>
        ))}
      </MenuBar>
      <Toolbars>
        <ToolGroup $w={392}>
          <Grip $w={3}>
            <GripBar />
          </Grip>
          <Tools
            items={["new", "briefcase", "open", "save", "saveAll", "|", "preview", "print", "|", "cut", "copy", "paste", "del", "|", "undo", "redo", "|", "props", "|", "help"]}
          />
        </ToolGroup>
        <ToolGroup $w={327}>
          <Grip $w={8} $double>
            <GripBar />
            <GripBar />
          </Grip>
          <Tools
            items={["book", "pasteLink", "find", "syncWin", "check", "|", "gShape", "gWin", "brush", "bucket", "letter", "|", "gFolder", "gLeft", "gRight"]}
          />
        </ToolGroup>
        <ToolGroup $w={235}>
          <Grip $w={8} $double>
            <GripBar />
            <GripBar />
          </Grip>
          <Tools
            items={["winNodes", "gWin", "winPage", "winPages", "|", "winGo", "gWinGo", "|", "winLens", "winText", "winGrid"]}
            active={["winLens", "winText"]}
          />
        </ToolGroup>
      </Toolbars>
      <Workspace>
        <Side>
          <SideGrip>
            <GripLines />
            <TinyButton>
              <Svg width="8" height="6" viewBox="0 0 8 6">
                <path d="M0 5.500l4-4 4 4z" fill="#909090" />
              </Svg>
            </TinyButton>
            <TinyButton>
              <Svg width="8" height="8" viewBox="0 0 8 8">
                <path d="M1 1l6 6M7 1l-6 6" stroke="#000" strokeWidth="1.800" />
              </Svg>
            </TinyButton>
          </SideGrip>
          <SideFrame>
            <SideInner>
              <FilterBar>
                <FilterLabel>筛选</FilterLabel>
                <FilterInput />
                <FilterAction>
                  <Icon name="filterOff" size={15} />
                </FilterAction>
                <FilterAction>
                  <Icon name="refresh" size={15} />
                </FilterAction>
              </FilterBar>
              <Tree>
                {nodesList.map((n) => (
                  <TreeItem key={n.label} node={n} />
                ))}
              </Tree>
              <ScrollBar $h={19}>
                <ScrollArrow>
                  <Arrow />
                </ScrollArrow>
                <Thumb $w={282} />
                <ScrollGap $w={42} />
                <ScrollArrow>
                  <Arrow right />
                </ScrollArrow>
              </ScrollBar>
            </SideInner>
          </SideFrame>
          <SideTabs>
            <SideTab $active $w={61}>
              <Icon name="winLens" />
              <TabText>本地</TabText>
            </SideTab>
            <SideTab $w={72}>
              <Icon name="repo" />
              <Mono>仓库(R)</Mono>
            </SideTab>
          </SideTabs>
        </Side>
        <Canvas>
          <Sheet>
            <PageEdge />
          </Sheet>
          <ScrollBar $h={20}>
            <ScrollArrow>
              <Arrow />
            </ScrollArrow>
            <ScrollGap $w={691} />
            <Thumb $w={74} />
          </ScrollBar>
        </Canvas>
      </Workspace>
      <StatusStrip />
      <TablePropertiesDialog />
    </Window>
  );
}
